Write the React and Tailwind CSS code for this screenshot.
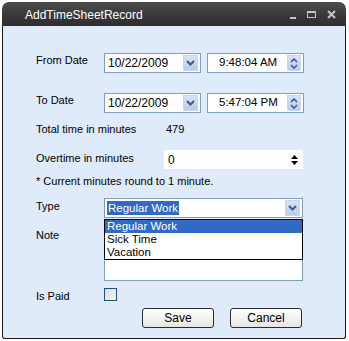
const font = { fontFamily: '"Liberation Sans", Arial, sans-serif' };

const Chevron = () => (
  <svg width="9" height="6" viewBox="0 0 9 6">
    <path d="M1 1 L4.5 4.5 L8 1" fill="none" stroke="#3f5a8c" strokeWidth="2" />
  </svg>
);

const DropBtn = () => (
  <div className="w-[15px] h-[16px] mr-[2px] flex items-center justify-center bg-gradient-to-b from-[#d9e3f6] to-[#b9cbef] border border-[#c9d6ee]">
    <Chevron />
  </div>
);

const SpinBtn = () => (
  <div className="w-[14px] h-[16px] mr-[2px] flex flex-col items-center justify-center gap-[1px] bg-gradient-to-b from-[#d9e3f6] to-[#b9cbef] border border-[#c9d6ee]">
    <svg width="8" height="5" viewBox="0 0 8 5">
      <path d="M1 4 L4 1 L7 4" fill="none" stroke="#3f5a8c" strokeWidth="1.6" />
    </svg>
    <svg width="8" height="5" viewBox="0 0 8 5">
      <path d="M1 1 L4 4 L7 1" fill="none" stroke="#3f5a8c" strokeWidth="1.6" />
    </svg>
  </div>
);

const Field = ({ children, className = "" }) => (
  <div className={`bg-white border border-[#7f9db9] flex items-center ${className}`}>
    {children}
  </div>
);

const Label = ({ children, className = "" }) => (
  <div className={`w-[68px] text-[11px] leading-[13px] text-black ${className}`}>{children}</div>
);

const DateRow = ({ label, date, time, mt }) => (
  <div className={`flex items-start h-[20px] ${mt}`}>
    <Label className="pt-[1px]">{label}</Label>
    <Field className="w-[97px] h-[20px] justify-between">
      <span className="pl-[3px] text-[12px]">{date}</span>
      <DropBtn />
    </Field>
    <Field className="w-[97px] h-[20px] ml-[6px] justify-between">
      <span className="pl-[11px] text-[11.5px]">{time}</span>
      <SpinBtn />
    </Field>
  </div>
);

export default function App() {
  return (
    <div className="w-[349px] h-[341px] bg-white overflow-hidden pt-[2px] pl-[2px]" style={font}>
      <div className="w-[344px] h-[337px] flex flex-col">
        {/* title bar */}
        <div className="h-[24px] rounded-t-[7px] bg-gradient-to-b from-[#4d4d4d] via-[#3a3a3a] to-[#2e2e2e] flex items-center pl-[23px] pr-[10px]">
          <span className="text-white text-[12px] leading-none mt-[1px]">AddTimeSheetRecord</span>
          <div className="ml-auto flex items-center gap-[11px]">
            <div className="w-[6px] h-[2px] bg-[#c4c4c4] mt-[7px]" />
            <div className="w-[9px] h-[7px] border border-[#c4c4c4] border-t-[2px]" />
            <svg width="9" height="9" viewBox="0 0 9 9">
              <path d="M1 1 L8 8 M8 1 L1 8" stroke="#c4c4c4" strokeWidth="2" />
            </svg>
          </div>
        </div>

        {/* body */}
        <div className="flex-1 bg-[#dfeafa] border-x border-b border-[#1a1a1a] rounded-b-[3px] pl-[33px]">
          <DateRow label="From Date" date="10/22/2009" time="9:48:04 AM" mt="mt-[27px]" />
          <DateRow label="To Date" date="10/22/2009" time="5:47:04 PM" mt="mt-[20px]" />

          <div className="flex mt-[10px] text-[11px] leading-[13px]">
            <div className="w-[130px]">Total time in minutes</div>
            <div>479</div>
          </div>

          <div className="flex items-start mt-[14px] h-[19px]">
            <div className="w-[128px] text-[11px] leading-[13px] pt-[2px]">Overtime in minutes</div>
            <Field className="w-[139px] h-[19px] justify-between border-white">
              <span className="pl-[3px] text-[12px]">0</span>
              <div className="flex flex-col items-center mr-[4px] gap-[2px]">
                <svg width="7" height="4" viewBox="0 0 7 4"><path d="M0 4 L3.5 0 L7 4Z" fill="#000" /></svg>
                <svg width="7" height="4" viewBox="0 0 7 4"><path d="M0 0 L3.5 4 L7 0Z" fill="#000" /></svg>
              </div>
            </Field>
          </div>

          <div className="mt-[6px] text-[11px] leading-[13px]">* Current minutes round to 1 minute.</div>

          <div className="flex items-start mt-[10px] h-[20px]">
            <Label className="pt-[2px]">Type</Label>
            <Field className="w-[199px] h-[20px] justify-between">
              <span className="ml-[2px] px-[1px] bg-[#316ac5] text-white text-[11.5px] leading-[14px]">Regular Work</span>
              <DropBtn />
            </Field>
          </div>

          <div className="flex items-start mt-[1px] h-[62px] relative">
            <Label className="pt-[10px]">Note</Label>
            <Field className="w-[199px] h-[62px]" />
            <div className="absolute left-[68px] top-0 w-[199px] h-[41px] bg-white border border-black text-[11.5px] leading-[13px]">
              <div className="bg-[#316ac5] text-white pl-[2px]">Regular Work</div>
              <div className="pl-[2px]">Sick Time</div>
              <div className="pl-[2px]">Vacation</div>
            </div>
          </div>

          <div className="flex items-start mt-[7px] h-[14px]">
            <Label className="pt-[2px]">Is Paid</Label>
            <div className="w-[13px] h-[13px] border border-[#1c5180] bg-gradient-to-br from-[#dcdcd6] to-[#f5f5f3]" />
          </div>

          <div className="flex mt-[6px] ml-[106px] gap-[16px]">
            <button className="w-[72px] h-[20px] rounded-[3px] border border-[#2a2a2a] bg-gradient-to-b from-[#ffffff] to-[#e6e6e0] text-[12px] leading-none">Save</button>
            <button className="w-[72px] h-[20px] rounded-[3px] border border-[#2a2a2a] bg-gradient-to-b from-[#ffffff] to-[#e6e6e0] text-[12px] leading-none">Cancel</button>
          </div>
        </div>
      </div>
    </div>
  );
}
